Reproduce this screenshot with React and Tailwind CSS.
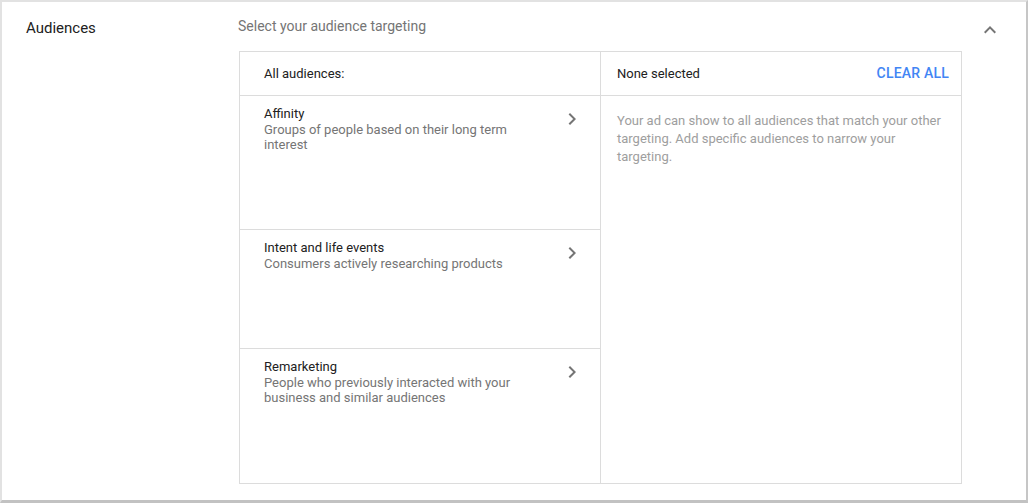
import React from "react";

const categories = [
  {
    title: "Affinity",
    desc: "Groups of people based on their long term interest",
    h: "h-[134px] border-b",
  },
  {
    title: "Intent and life events",
    desc: "Consumers actively researching products",
    h: "h-[119px] border-b",
  },
  {
    title: "Remarketing",
    desc: "People who previously interacted with your business and similar audiences",
    h: "flex-1",
  },
];

function ChevronRight() {
  return (
    <svg width="24" height="24" viewBox="0 0 24 24" className="shrink-0 fill-[#757575]">
      <path d="M10 6L8.59 7.41 13.17 12l-4.58 4.59L10 18l6-6z" />
    </svg>
  );
}

function ChevronUp() {
  return (
    <svg width="24" height="24" viewBox="0 0 24 24" className="fill-[#757575]">
      <path d="M12 8l-6 6 1.41 1.41L12 10.83l4.59 4.58L18 14z" />
    </svg>
  );
}

export default function App() {
  return (
    <div className="w-[1028px] h-[503px] bg-white font-['Roboto',sans-serif] border-t-2 border-l-2 border-t-[#e2e2e2] border-l-[#e2e2e2] border-r-2 border-r-[#c6c6c6] border-b-[3px] border-b-[#c2c2c2]">
      <div className="flex">
        <div className="w-[236px] pl-[24px] pt-[16px]">
          <h2 className="text-[15px] leading-5 text-[#212121]">Audiences</h2>
        </div>

        <div className="w-[724px] pt-[14px]">
          <p className="text-[14px] leading-5 text-[#757575]">Select your audience targeting</p>

          <div className="ml-px mt-[15px] h-[433px] flex border border-[#dcdcdc]">
            <div className="w-[361px] flex flex-col border-r border-[#dcdcdc]">
              <div className="h-[44px] flex items-center px-[24px] border-b border-[#dcdcdc] text-[13px] text-[#212121]">
                All audiences:
              </div>
              {categories.map((c) => (
                <div
                  key={c.title}
                  className={`${c.h} border-[#dcdcdc] flex items-start justify-between pl-[24px] pr-[16px] pt-[10px] cursor-pointer`}
                >
                  <div className="w-[260px] text-[13px] leading-[15.5px]">
                    <div className="text-[#212121]">{c.title}</div>
                    <div className="text-[#757575]">{c.desc}</div>
                  </div>
                  <div className="mt-[1px]">
                    <ChevronRight />
                  </div>
                </div>
              ))}
            </div>

            <div className="flex-1 flex flex-col">
              <div className="h-[44px] flex items-center justify-between pl-[16px] pr-[12px] border-b border-[#dcdcdc]">
                <span className="text-[13px] text-[#212121]">None selected</span>
                <button className="text-[14px] font-medium text-[#4285f4] tracking-[0.2px]">CLEAR ALL</button>
              </div>
              <p className="px-[16px] pt-[16px] text-[13px] leading-[18px] text-[#9e9e9e]">
                Your ad can show to all audiences that match your other targeting. Add specific audiences to narrow your targeting.
              </p>
            </div>
          </div>
        </div>

        <div className="ml-[16px] mt-[16px]">
          <ChevronUp />
        </div>
      </div>
    </div>
  );
}
